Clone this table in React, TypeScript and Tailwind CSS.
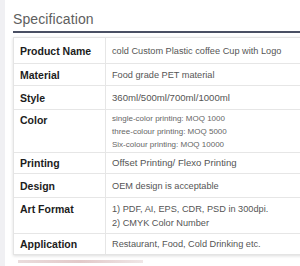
import React from "react";

type Row = {
  label: string;
  values: string[];
  h: number;
  small?: boolean;
  size?: string;
  labelPt?: number;
};

const rows: Row[] = [
  { label: "Product Name", values: ["cold Custom Plastic coffee Cup with Logo"], h: 25 },
  { label: "Material", values: ["Food grade PET material"], h: 22 },
  { label: "Style", values: ["360ml/500ml/700ml/1000ml"], h: 24, size: "big" },
  {
    label: "Color",
    values: [
      "single-color printing: MOQ 1000",
      "three-colour printing: MOQ 5000",
      "Six-colour printing: MOQ 10000",
    ],
    h: 43,
    small: true,
    labelPt: 3,
  },
  { label: "Printing", values: ["Offset Printing/ Flexo Printing"], h: 21, size: "big" },
  { label: "Design", values: ["OEM design is acceptable"], h: 24 },
  {
    label: "Art Format",
    values: ["1) PDF, AI, EPS, CDR, PSD in 300dpi.", "2) CMYK Color Number"],
    h: 36,
    labelPt: 4,
  },
  { label: "Application", values: ["Restaurant, Food, Cold Drinking etc."], h: 21 },
];

export default function App() {
  return (
    <div className="w-[300px] h-[266px] bg-white flex overflow-hidden font-['Liberation_Sans',Arial,sans-serif]">
      <div className="w-[5px] shrink-0 bg-[#f0f0f3]" />
      <div className="flex-1 pl-[8px] pt-[10px] flex flex-col">
        <div className="text-[14px] leading-[18px] text-[#5e5e5e] tracking-[0.1px]">Specification</div>
        <div className="mt-[3px] h-[2px] w-[300px] bg-[#4a5064]" />
        <div className="mt-[4px] w-[300px] bg-white border border-[#e4e4e4] shadow-[0_1px_3px_rgba(0,0,0,0.14)]">
          {rows.map((r, i) => (
            <div
              key={r.label}
              className={`flex ${i > 0 ? "border-t border-[#e6e6e6]" : ""}`}
              style={{ height: r.h }}
            >
              <div
                className={`w-[92px] shrink-0 border-r border-[#e6e6e6] pl-[6px] flex ${
                  r.labelPt !== undefined ? "items-start" : "items-center"
                }`}
                style={r.labelPt !== undefined ? { paddingTop: r.labelPt } : undefined}
              >
                <span className="text-[10.5px] leading-[14px] font-bold text-[#1c1c1c]">{r.label}</span>
              </div>
              <div className="flex-1 pl-[6px] flex flex-col justify-center">
                {r.values.map((v) => (
                  <div
                    key={v}
                    className={
                      r.small
                        ? "text-[8px] leading-[13px] text-[#666]"
                        : r.size === "big"
                        ? "text-[9.6px] leading-[14px] text-[#555]"
                        : "text-[9.2px] leading-[14px] text-[#555]"
                    }
                  >
                    {v}
                  </div>
                ))}
              </div>
            </div>
          ))}
        </div>
        <div className="mt-[5px] ml-[5px] h-[3px] w-[125px] bg-gradient-to-r from-[#eadcdc] via-[#e2c9c9] to-[#efe6e6]" />
      </div>
    </div>
  );
}
